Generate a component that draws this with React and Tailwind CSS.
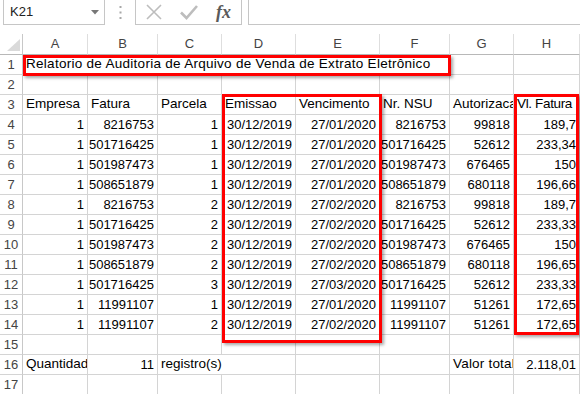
import React from "react";

const cols = ["A", "B", "C", "D", "E", "F", "G", "H"];

const heads = ["Empresa", "Fatura", "Parcela", "Emissao", "Vencimento", "Nr. NSU", "Autorizacao", "Vl. Fatura"];

const data = [
  ["1", "8216753", "1", "30/12/2019", "27/01/2020", "8216753", "99818", "189,7"],
  ["1", "501716425", "1", "30/12/2019", "27/01/2020", "501716425", "52612", "233,34"],
  ["1", "501987473", "1", "30/12/2019", "27/01/2020", "501987473", "676465", "150"],
  ["1", "508651879", "1", "30/12/2019", "27/01/2020", "508651879", "680118", "196,66"],
  ["1", "8216753", "2", "30/12/2019", "27/02/2020", "8216753", "99818", "189,7"],
  ["1", "501716425", "2", "30/12/2019", "27/02/2020", "501716425", "52612", "233,33"],
  ["1", "501987473", "2", "30/12/2019", "27/02/2020", "501987473", "676465", "150"],
  ["1", "508651879", "2", "30/12/2019", "27/02/2020", "508651879", "680118", "196,65"],
  ["1", "501716425", "3", "30/12/2019", "27/03/2020", "501716425", "52612", "233,33"],
  ["1", "11991107", "1", "30/12/2019", "27/01/2020", "11991107", "51261", "172,65"],
  ["1", "11991107", "2", "30/12/2019", "27/02/2020", "11991107", "51261", "172,65"],
];

const cell = "border-r border-b border-[#d4d4d4] flex items-center whitespace-nowrap overflow-hidden text-black";
const txt = cell + " justify-start px-[3px] text-[13.5px]";
const num = cell + " justify-end pr-[3px] text-[13px]";

const RowHead = ({ n }) => (
  <div className="border-r border-b border-[#d4d4d4] border-r-[#c8c8c8] flex items-center justify-center text-[13px] text-[#444]">
    {n}
  </div>
);

const Empty = () => <div className={cell} />;

const TopBar = () => (
  <div className="h-[34px] flex items-start">
    <div className="ml-[3px] w-[102px] h-[25px] border border-t-0 border-[#c6c6c6] flex items-center justify-between pl-[6px] pr-[5px]">
      <span className="text-[13px] text-[#222]">K21</span>
      <svg width="8" height="5" viewBox="0 0 8 5">
        <path d="M0 0 L8 0 L4 4.5 Z" fill="#777" />
      </svg>
    </div>
    <div className="w-[30px] h-[25px] flex items-center justify-center">
      <svg width="3" height="15" viewBox="0 0 3 15">
        <rect x="0.5" y="1" width="2" height="2" fill="#a8a8a8" />
        <rect x="0.5" y="6.5" width="2" height="2" fill="#a8a8a8" />
        <rect x="0.5" y="12" width="2" height="2" fill="#a8a8a8" />
      </svg>
    </div>
    <div className="w-[107px] h-[25px] border border-t-0 border-[#c6c6c6] flex items-center">
      <div className="w-[35px] flex justify-center">
        <svg width="16" height="16" viewBox="0 0 16 16">
          <path d="M1 1 L15 15 M15 1 L1 15" stroke="#bdbdbd" strokeWidth="1.6" fill="none" />
        </svg>
      </div>
      <div className="w-[35px] flex justify-center">
        <svg width="18" height="16" viewBox="0 0 18 16">
          <path d="M1 8.5 L6.5 14 L17 2" stroke="#bdbdbd" strokeWidth="2.6" fill="none" />
        </svg>
      </div>
      <div className="w-[35px] flex justify-center">
        <span className="font-['Liberation_Serif'] italic font-bold text-[18px] leading-none text-[#5a5a5a]">fx</span>
      </div>
    </div>
    <div className="ml-[6px] flex-1 h-[25px] border-l border-b border-[#c6c6c6]" />
  </div>
);

export default function App() {
  return (
    <div className="relative w-[580px] h-[394px] overflow-hidden bg-white font-['Liberation_Sans',Arial,sans-serif]">
      <TopBar />
      <div className="grid grid-cols-[23px_65px_70px_64px_74px_84px_70px_64px_66px] grid-rows-[21px_repeat(17,20px)]">
        {/* column headers */}
        <div className="border-r border-b border-r-[#c8c8c8] border-b-[#b8b8b8] flex items-end justify-end pr-[2px] pb-[3px]">
          <svg width="13" height="12" viewBox="0 0 13 12">
            <path d="M13 0 L13 12 L0 12 Z" fill="#dadada" />
          </svg>
        </div>
        {cols.map((c) => (
          <div
            key={c}
            className="border-r border-b border-r-[#dedede] border-b-[#b8b8b8] flex items-center justify-center text-[13px] text-[#444]"
          >
            {c}
          </div>
        ))}

        {/* row 1 */}
        <RowHead n={1} />
        <div className={txt + " col-span-6 overflow-visible tracking-[0.28px]"}>
          Relatorio de Auditoria de Arquivo de Venda de Extrato Eletrônico
        </div>
        <Empty />
        <Empty />

        {/* row 2 */}
        <RowHead n={2} />
        {cols.map((c) => (
          <Empty key={c} />
        ))}

        {/* row 3 */}
        <RowHead n={3} />
        {heads.map((h) => (
          <div key={h} className={txt + (h === "Vl. Fatura" ? " tracking-[-0.35px]" : "")}>
            {h}
          </div>
        ))}

        {data.map((r, i) => (
          <React.Fragment key={i}>
            <RowHead n={i + 4} />
            {r.map((v, j) => (
              <div key={j} className={num}>
                {v}
              </div>
            ))}
          </React.Fragment>
        ))}

        {/* row 15 */}
        <RowHead n={15} />
        {cols.map((c) => (
          <Empty key={c} />
        ))}

        {/* row 16 */}
        <RowHead n={16} />
        <div className={txt}>Quantidade</div>
        <div className={num}>11</div>
        <div className={txt + " col-span-2"}>registro(s)</div>
        <Empty />
        <Empty />
        <div className={txt + " tracking-[0.2px]"}>Valor total</div>
        <div className={num}>2.118,01</div>

        {/* row 17 */}
        <RowHead n={17} />
        {cols.map((c) => (
          <Empty key={c} />
        ))}
      </div>

      {/* highlight boxes drawn over the sheet */}
      <div className="absolute left-[23px] top-[55px] w-[428px] h-[21px] border-[3px] border-[#ff0000] shadow-[2px_2px_3px_rgba(0,0,0,0.35)]" />
      <div className="absolute left-[222px] top-[94px] w-[160px] h-[249px] border-[3px] border-[#ff0000] shadow-[2px_2px_3px_rgba(0,0,0,0.35)]" />
      <div className="absolute left-[514px] top-[94px] w-[65px] h-[241px] border-[3px] border-[#ff0000] shadow-[2px_2px_3px_rgba(0,0,0,0.35)]" />
    </div>
  );
}
